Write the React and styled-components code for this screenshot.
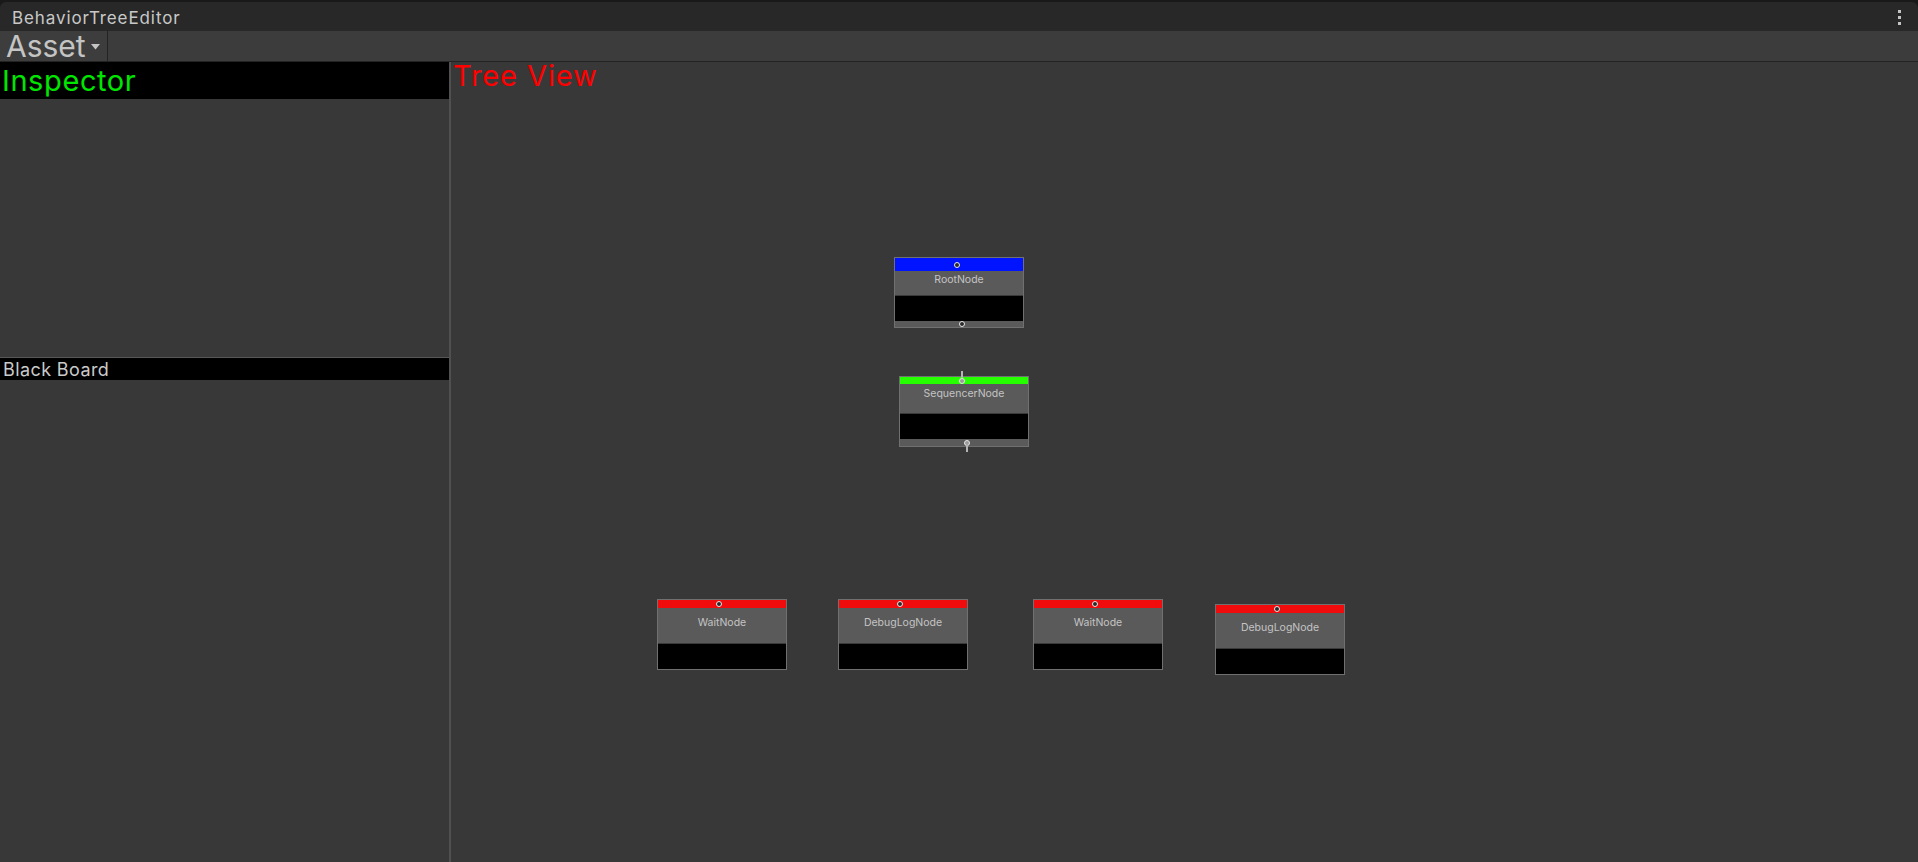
import React from 'react'
import styled, { createGlobalStyle } from 'styled-components'

const GlobalStyle = createGlobalStyle`
    html, body {
        margin: 0;
        padding: 0;
        background-color: #191919;
        font-family: Inter, "Noto Sans", sans-serif;
    }
    #root {
        height: 100vh;
    }
`

const nodes = [
    { name: 'RootNode', x: 443, y: 195, color: '#0014ff', barH: 13, titleH: 24, titlePad: 2, footerH: 6, inShift: -2, outShift: 3 },
    { name: 'SequencerNode', x: 448, y: 314, color: '#26ff00', barH: 7, titleH: 29, titlePad: 3, footerH: 7, inShift: -2, outShift: 3, stubs: true, filled: true },
    { name: 'WaitNode', x: 206, y: 537, color: '#f00c0c', barH: 8, titleH: 35, titlePad: 8, footerH: 0, inShift: -3 },
    { name: 'DebugLogNode', x: 387, y: 537, color: '#f00c0c', barH: 8, titleH: 35, titlePad: 8, footerH: 0, inShift: -3 },
    { name: 'WaitNode', x: 582, y: 537, color: '#f00c0c', barH: 8, titleH: 35, titlePad: 8, footerH: 0, inShift: -3 },
    { name: 'DebugLogNode', x: 764, y: 542, color: '#f00c0c', barH: 8, titleH: 35, titlePad: 8, footerH: 0, inShift: -3 },
]

const TreeNode = ({ node }) => (
    <NodeBox $x={node.x} $y={node.y}>
        {node.stubs && <Stub $top={-6} $shift={node.inShift} />}
        <NodeBar $color={node.color} $h={node.barH}>
            <Port $shift={node.inShift} $filled={node.filled} />
        </NodeBar>
        <NodeTitle $h={node.titleH} $pad={node.titlePad}>{node.name}</NodeTitle>
        <NodeBody />
        {node.footerH > 0 && (
            <NodeFooter $h={node.footerH}>
                <Port $shift={node.outShift} $filled={node.filled} />
            </NodeFooter>
        )}
        {node.stubs && <Stub $bottom={-6} $shift={node.outShift} />}
    </NodeBox>
)

const App = () => {
    return (
        <>
            <GlobalStyle />
            <EditorWindow>
                <TitleStrip>
                    <TitleTab>
                        <span>BehaviorTreeEditor</span>
                        <MenuDots>
                            <i /><i /><i />
                        </MenuDots>
                    </TitleTab>
                </TitleStrip>
                <Toolbar>
                    <ToolbarMenu>
                        Asset
                        <svg width="9" height="6" viewBox="0 0 9 6">
                            <path d="M0 0 L9 0 L4.5 5.5 Z" fill="#c4c4c4" />
                        </svg>
                    </ToolbarMenu>
                </Toolbar>
                <SplitView>
                    <LeftPane>
                        <InspectorHeader>Inspector</InspectorHeader>
                        <InspectorBody />
                        <BoardHeader>Black Board</BoardHeader>
                        <BoardBody />
                    </LeftPane>
                    <Splitter />
                    <TreeCanvas>
                        <CanvasLabel>Tree View</CanvasLabel>
                        {nodes.map((n, i) => <TreeNode key={i} node={n} />)}
                    </TreeCanvas>
                </SplitView>
            </EditorWindow>
        </>
    )
}

const EditorWindow = styled.div`
    display: flex;
    flex-direction: column;
    height: 100vh;
    overflow: hidden;
`

const TitleStrip = styled.div`
    padding-top: 2px;
    background-color: #191919;
`

const TitleTab = styled.div`
    height: 29px;
    box-sizing: border-box;
    padding: 3px 0 0 12px;
    display: flex;
    align-items: flex-start;
    justify-content: space-between;
    background-color: #282828;
    border-radius: 6px 6px 0 0;
    color: #c8c8c8;
    font-size: 17px;
    letter-spacing: 0.9px;
    line-height: 26px;
`

const MenuDots = styled.div`
    display: flex;
    flex-direction: column;
    gap: 3px;
    margin: 5px 17px 0 0;
    i{
        display: block;
        width: 3px;
        height: 3px;
        background-color: #c4c4c4;
    }
`

const Toolbar = styled.div`
    height: 30px;
    display: flex;
    background-color: #3c3c3c;
    border-bottom: 1px solid #232323;
`

const ToolbarMenu = styled.div`
    width: 108px;
    box-sizing: border-box;
    padding-left: 6px;
    display: flex;
    align-items: flex-start;
    gap: 5px;
    color: #c4c4c4;
    font-size: 30px;
    line-height: 30px;
    background-color: #3d3d3d;
    border-right: 1px solid #232323;
    svg{
        margin-top: 13px;
    }
`

const SplitView = styled.div`
    flex: 1;
    display: flex;
    min-height: 0;
`

const LeftPane = styled.div`
    width: 449px;
    display: flex;
    flex-direction: column;
    background-color: #383838;
`

const InspectorHeader = styled.div`
    height: 37px;
    padding-left: 2px;
    background-color: #000;
    color: #00e600;
    font-size: 29px;
    letter-spacing: 0.6px;
    line-height: 37px;
`

const InspectorBody = styled.div`
    height: 258px;
    border-bottom: 1px solid #585858;
`

const BoardHeader = styled.div`
    height: 22px;
    padding-left: 3px;
    background-color: #000;
    color: #cacaca;
    font-size: 18px;
    letter-spacing: 0.4px;
    line-height: 23px;
`

const BoardBody = styled.div`
    flex: 1;
`

const Splitter = styled.div`
    width: 2px;
    background-color: #505050;
`

const TreeCanvas = styled.div`
    flex: 1;
    position: relative;
    background-color: #383838;
`

const CanvasLabel = styled.div`
    padding-left: 2px;
    margin-top: -1px;
    color: #ff0000;
    font-size: 29px;
    letter-spacing: 0.9px;
    line-height: 30px;
`

const NodeBox = styled.div.attrs(p => ({ style: { left: p.$x, top: p.$y } }))`
    position: absolute;
    width: 128px;
    display: flex;
    flex-direction: column;
    border: 1px solid #707070;
    background-color: #5a5a5a;
`

const NodeBar = styled.div`
    height: ${p => p.$h}px;
    display: flex;
    align-items: center;
    justify-content: center;
    background-color: ${p => p.$color};
`

const Port = styled.span`
    width: 4px;
    height: 4px;
    border-radius: 50%;
    border: 1px solid #e6e6e6;
    background-color: ${p => p.$filled ? '#9a9a9a' : '#2a2a2a'};
    transform: translateX(${p => p.$shift}px);
`

const NodeTitle = styled.div`
    height: ${p => p.$h}px;
    box-sizing: border-box;
    padding-top: ${p => p.$pad}px;
    text-align: center;
    color: #c4c4c4;
    font-size: 10.5px;
    line-height: 13px;
    background-color: #5a5a5a;
`

const NodeBody = styled.div`
    height: 26px;
    box-sizing: border-box;
    border-top: 1px solid #3a3a3a;
    background-color: #000;
`

const NodeFooter = styled.div`
    height: ${p => p.$h}px;
    display: flex;
    align-items: center;
    justify-content: center;
    background-color: #5a5a5a;
`

const Stub = styled.span`
    position: absolute;
    left: calc(50% - 1px + ${p => p.$shift}px);
    ${p => p.$top !== undefined ? `top: ${p.$top}px;` : `bottom: ${p.$bottom}px;`}
    width: 2px;
    height: 7px;
    background-color: #b4b4b4;
`

export default App
